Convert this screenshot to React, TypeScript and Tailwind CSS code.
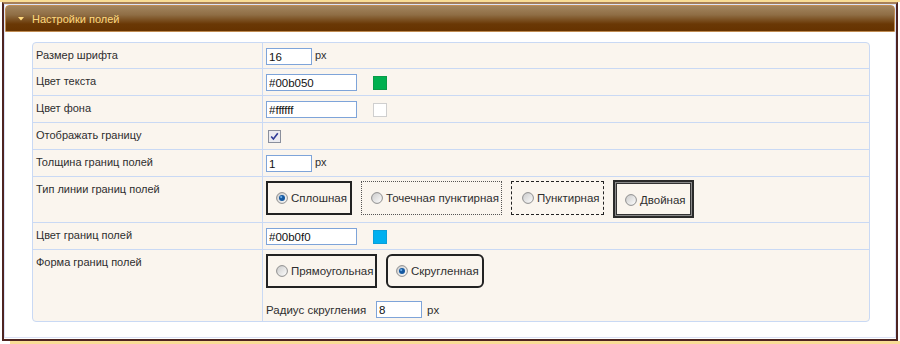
import type { ReactNode } from "react";

function Radio({ checked }: { checked?: boolean }) {
  return (
    <svg width="12" height="12" viewBox="0 0 12 12" className="shrink-0">
      <defs>
        <linearGradient id={checked ? "rg-on" : "rg-off"} x1="0" y1="0" x2="1" y2="1">
          <stop offset="0" stopColor="#c9c9c9" />
          <stop offset="1" stopColor="#ffffff" />
        </linearGradient>
      </defs>
      <circle cx="6" cy="6" r="5.4" fill={`url(#${checked ? "rg-on" : "rg-off"})`} stroke="#8e8e8e" strokeWidth="1" />
      {checked && (
        <>
          <circle cx="6" cy="6" r="3" fill="#1458a0" />
          <circle cx="5.2" cy="5.1" r="1.1" fill="#6fb0ea" />
        </>
      )}
    </svg>
  );
}

function Checkbox() {
  return (
    <svg width="13" height="13" viewBox="0 0 13 13" className="shrink-0">
      <rect x="0.5" y="0.5" width="12" height="12" fill="#ebebf0" stroke="#8a8f9c" />
      <path d="M3.2 6.4 L5.4 9 L9.8 3.2" fill="none" stroke="#2f3b96" strokeWidth="1.6" />
    </svg>
  );
}

function TextInput({ value, w }: { value: string; w: string }) {
  return (
    <input
      readOnly
      value={value}
      className={`${w} h-[17px] border border-[#7ea4d9] bg-white px-[2px] text-[11.5px] leading-[15px] text-[#111] outline-none`}
    />
  );
}

function Row({ label, h, last, children }: { label: string; h: string; last?: boolean; children: ReactNode }) {
  return (
    <div className={`flex ${h} ${last ? "" : "border-b border-[#c9d9f4]"}`}>
      <div className="w-[230px] shrink-0 border-r border-[#c9d9f4] pl-[3px] pt-[5px]">{label}</div>
      <div className="flex-1 pl-[3px] pt-[5px]">{children}</div>
    </div>
  );
}

function Option({ label, checked, className }: { label: string; checked?: boolean; className: string }) {
  return (
    <div className={`flex items-center gap-[3px] whitespace-nowrap ${className}`}>
      <Radio checked={checked} />
      <span>{label}</span>
    </div>
  );
}

export default function App() {
  return (
    <div className="w-[900px] h-[344px] bg-white font-['Liberation_Sans',Arial,sans-serif] text-[11px] leading-[14px] text-[#2e2e2e]">
      <div className="h-[2px] bg-[#f9dd96]" />
      <div className="ml-[2px] w-[896px] h-[339px] border-2 border-[#4e2421] border-t-[#a7805a]">
        <div className="h-[334px] border border-[#dbe2f6]">
          {/* header */}
          <div className="flex h-[27px] items-center gap-[8px] rounded-t-[4px] border border-[#bf8b52] bg-[linear-gradient(to_bottom,#a3855f_0%,#8f6e45_35%,#6a3805_72%,#663300_100%)] pl-[12px] text-[11px] text-[#ffd97e]">
            <svg width="6" height="4" viewBox="0 0 6 4">
              <path d="M0 0 H6 L3 3.5 Z" fill="#ffd97e" />
            </svg>
            <span>Настройки полей</span>
          </div>

          {/* settings panel */}
          <div className="ml-[27px] mt-[10px] w-[838px] rounded-[4px] border border-[#c9d9f4] bg-[#faf5ee]">
            <Row label="Размер шрифта" h="h-[26px]">
              <div className="flex items-start gap-[3px]">
                <TextInput value="16" w="w-[46px]" />
                <span>px</span>
              </div>
            </Row>
            <Row label="Цвет текста" h="h-[27px]">
              <div className="flex items-center gap-[16px]">
                <TextInput value="#00b050" w="w-[91px]" />
                <span className="h-[14px] w-[14px] border border-[#0a9a48] bg-[#00b050]" />
              </div>
            </Row>
            <Row label="Цвет фона" h="h-[27px]">
              <div className="flex items-center gap-[16px]">
                <TextInput value="#ffffff" w="w-[91px]" />
                <span className="h-[14px] w-[14px] border border-[#cfcfcf] bg-white" />
              </div>
            </Row>
            <Row label="Отображать границу" h="h-[27px]">
              <div className="ml-[2px] mt-[2px]">
                <Checkbox />
              </div>
            </Row>
            <Row label="Толщина границ полей" h="h-[27px]">
              <div className="flex items-start gap-[3px]">
                <TextInput value="1" w="w-[46px]" />
                <span>px</span>
              </div>
            </Row>
            <Row label="Тип линии границ полей" h="h-[46px]">
              <div className="-mt-[1px] flex items-start gap-[9px] text-[11.5px]">
                <Option label="Сплошная" checked className="h-[34px] w-[86px] border-2 border-[#222] pl-[8px]" />
                <Option label="Точечная пунктирная" className="h-[34px] w-[141px] border border-dotted border-[#555] pl-[9px]" />
                <Option label="Пунктирная" className="h-[34px] w-[93px] border border-dashed border-[#222] pl-[10px]" />
                <Option
                  label="Двойная"
                  className="-mt-[1px] h-[38px] w-[81px] border-2 border-[#2a2a2a] pl-[10px] pt-[2px] shadow-[inset_0_0_0_1px_#8a8a8a,inset_0_0_0_2px_#333]"
                />
              </div>
            </Row>
            <Row label="Цвет границ полей" h="h-[27px]">
              <div className="flex items-center gap-[16px]">
                <TextInput value="#00b0f0" w="w-[91px]" />
                <span className="h-[14px] w-[14px] border border-[#0a9fd8] bg-[#00b0f0]" />
              </div>
            </Row>
            <Row label="Форма границ полей" h="h-[71px]" last>
              <div className="-mt-[1px] flex items-start gap-[9px] text-[11.5px]">
                <Option label="Прямоугольная" className="h-[34px] w-[111px] border-2 border-[#222] pl-[8px]" />
                <Option label="Скругленная" checked className="h-[34px] w-[98px] rounded-[6px] border-2 border-[#222] pl-[8px]" />
              </div>
              <div className="mt-[13px] flex items-center text-[11.5px]">
                <span className="w-[110px]">Радиус скругления</span>
                <TextInput value="8" w="w-[46px]" />
                <span className="ml-[5px]">px</span>
              </div>
            </Row>
          </div>
        </div>
      </div>
      <div className="ml-[10px] h-[3px] bg-[#f9dd96]" />
    </div>
  );
}
